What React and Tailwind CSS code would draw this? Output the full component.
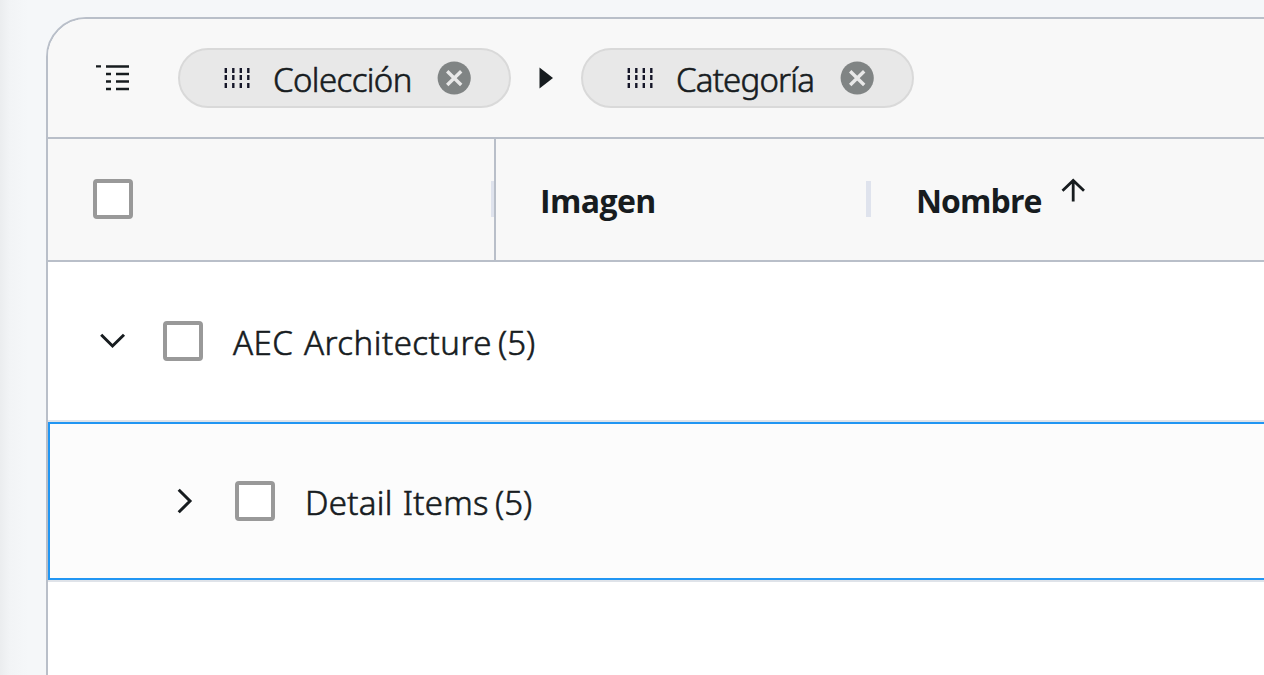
function GroupIcon() {
  return (
    <svg width="34" height="28" viewBox="0 0 34 28" className="shrink-0" fill="#171c1f">
      <path d="M0 1.2h5v2.4H0zM10 1.2h23v2.6H10zM10 8.8h5v2.4h-5zM20 8.8h13v2.4H20zM10 16.2h5v2.5h-5zM20 16.2h13v2.5H20zM10 23.8h5v2.5h-5zM20 23.8h13v2.5H20z" />
    </svg>
  );
}

function GripIcon() {
  return (
    <svg width="28" height="22" viewBox="0 0 28 22" className="shrink-0" stroke="#151628" strokeWidth="2.4">
      <path d="M2.8 1v5M10.3 1v5M17.8 1v5M25.3 1v5M2.8 8v5M10.3 8v5M17.8 8v5M25.3 8v5M2.8 16v5M10.3 16v5M17.8 16v5M25.3 16v5" />
    </svg>
  );
}

function RemoveIcon() {
  return (
    <svg width="34" height="34" viewBox="0 0 34 34" className="shrink-0">
      <circle cx="17.2" cy="17" r="16.6" fill="#808484" />
      <path d="M10.2 10.2 24.2 24M24.2 10.2 10.2 24" stroke="#e8e8e8" strokeWidth="3.4" />
    </svg>
  );
}

function Chip({ children }) {
  return (
    <div className="flex h-[60px] w-[333px] shrink-0 items-center rounded-full border-2 border-[#d9d9d9] bg-[#e8e8e8] pl-[43px]">
      <GripIcon />
      <div className="ml-[22px] w-[144px] shrink-0 pt-[4px]">{children}</div>
      <div className="ml-[20px]">
        <RemoveIcon />
      </div>
    </div>
  );
}

function Checkbox() {
  return <div className="size-10 shrink-0 rounded-[4px] border-4 border-[#999] bg-white" />;
}

export default function App() {
  return (
    <div className="h-[675px] w-[1264px] overflow-hidden bg-[linear-gradient(to_right,#ebedef_0px,#f2f4f6_10px,#f5f7f9_28px)] pt-[17px] pl-[46px] font-['Noto_Sans',sans-serif] text-[33px] leading-[44px] font-light whitespace-nowrap text-[#171c1f] [-webkit-text-stroke:0.6px_#171c1f]">
      <div className="flex h-[700px] w-[1300px] flex-col overflow-hidden rounded-tl-[40px] border-2 border-[#b9bfc9] bg-white">
        <div className="flex h-[120px] shrink-0 items-center border-b-2 border-[#b9bfc9] bg-[#f8f8f8] pl-[48px]">
          <GroupIcon />
          <div className="ml-[48px] flex items-center">
            <Chip>
              <span className="tracking-[-0.6px]">Colección</span>
            </Chip>
            <svg width="14" height="22" viewBox="0 0 14 22" className="mr-[28px] ml-[28px] shrink-0" fill="#171c1f">
              <path d="M.5.5 14 11 .5 21.5z" />
            </svg>
            <Chip>
              <span className="tracking-[-0.8px]">Categoría</span>
            </Chip>
          </div>
        </div>
        <div className="flex h-[123px] shrink-0 border-b-2 border-[#b9bfc9] bg-[#f8f8f8] font-['Open_Sans',sans-serif] text-[32px] font-bold [-webkit-text-stroke:0px]">
          <div className="flex w-[448px] shrink-0 items-center border-r-2 border-[#b9bfc9] pb-[2px] pl-[45px]">
            <Checkbox />
            <div className="ml-auto h-9 w-[3px] bg-[#dfe3ed]" />
          </div>
          <div className="flex w-[375px] shrink-0 items-center pb-[2px] pl-[44px]">
            <span className="pt-[5px] tracking-[-0.6px]">Imagen</span>
            <div className="ml-auto h-9 w-[5px] bg-[#dfe3ed]" />
          </div>
          <div className="flex items-center pb-[2px] pl-[45px]">
            <div className="w-[145px] pt-[5px]">
              <span className="tracking-[-0.9px]">Nombre</span>
            </div>
            <svg width="24" height="24" viewBox="0 0 24 24" className="mb-[18px] shrink-0" fill="none" stroke="#171c1f" strokeWidth="2.8">
              <path d="M12.2 23.5V2.5M1.5 12.7 12.2 2.5 23 12.7" />
            </svg>
          </div>
        </div>
        <div className="flex h-[160px] shrink-0 items-center border-b-2 border-[#dfe3e9] pl-[52px]">
          <svg width="26" height="16" viewBox="0 0 26 16" className="shrink-0" fill="none" stroke="#171c1f" strokeWidth="3">
            <path d="M1.2 1.7 12.5 13 24 1.7" />
          </svg>
          <div className="ml-[37px]">
            <Checkbox />
          </div>
          <div className="ml-[30px] flex pt-[3px]">
            <div className="w-[265px]">
              <span className="tracking-[0.5px] [word-spacing:1.5px]">AEC Architecture</span>
            </div>
            <span>(5)</span>
          </div>
        </div>
        <div className="h-[160px] shrink-0 border-b-2 border-[#dfe3e9]">
          <div className="flex h-[158px] items-center border-2 border-[#2196f3] bg-[#fcfcfc] pl-[126px]">
            <svg width="18" height="26" viewBox="0 0 18 26" className="shrink-0" fill="none" stroke="#171c1f" strokeWidth="3">
              <path d="M2.7 1.7 14 13 2.7 24.3" />
            </svg>
            <div className="ml-[41px]">
              <Checkbox />
            </div>
            <div className="ml-[30px] flex pt-[3px]">
              <div className="w-[190px]">
                <span className="tracking-[0.3px] [word-spacing:1px]">Detail Items</span>
              </div>
              <span>(5)</span>
            </div>
          </div>
        </div>
      </div>
    </div>
  );
}
